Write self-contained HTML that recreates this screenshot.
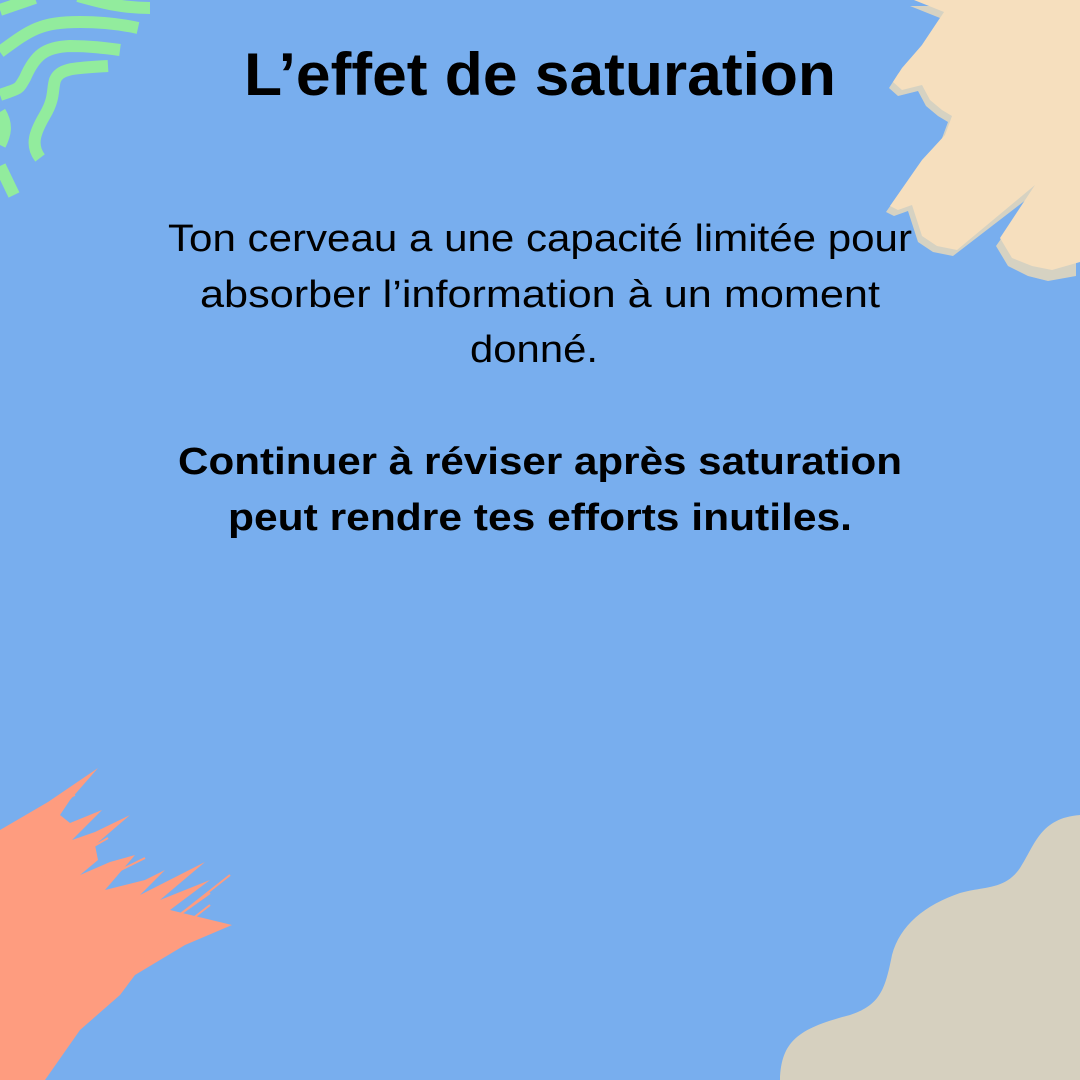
<!DOCTYPE html>
<html><head><meta charset="utf-8"><style>
html,body{margin:0;padding:0;width:1080px;height:1080px;overflow:hidden;background:#78aeee}
svg{display:block}
text{font-family:"Liberation Sans",sans-serif;fill:#000}
</style></head><body>
<svg width="1080" height="1080" viewBox="0 0 1080 1080" xmlns="http://www.w3.org/2000/svg">
<rect width="1080" height="1080" fill="#78aeee"/>
<g fill="none" stroke="#92ec9d" stroke-width="12" stroke-linecap="butt">
<path d="M0 10 L35 -2"/>
<path d="M78 -4 C100 2 120 8 150 8"/>
<path d="M0 52 C30 30 40 22 80 22 C100 22 120 24 138 28"/>
<path d="M0 95 C20 88 18 90 25 78 C35 55 45 47 70 46 C90 46 105 48 120 50"/>
<path d="M40 158 C30 145 35 132 45 115 C55 98 52 90 55 80 C60 68 75 68 108 66"/>
<path d="M0 112 C8 125 5 135 0 145"/>
<path d="M0 166 L14 195"/>
</g>
<polygon fill="#d6d2c2" transform="translate(-4,6)" points="914,0 944,12 922,45 902,68 893,82 902,90 922,85 930,100 942,110 952,116 945,135 922,160 890,206 898,210 912,205 922,236 937,246 957,250 1035,190 1000,240 1012,260 1032,270 1052,275 1080,270 1080,0"/>
<polygon fill="#f6dfbe" points="914,0 944,12 922,45 902,68 893,82 902,90 922,85 930,100 942,110 952,116 945,135 922,160 890,206 898,210 912,205 922,236 937,246 957,250 1035,185 1000,238 1012,258 1032,266 1052,270 1080,262 1080,0"/>
<polygon fill="#fe9c7f" points="0,830 48,802 98,768 70,800 60,815 70,823 102,810 72,840 95,832 130,815 95,845 98,860 80,875 110,862 135,855 105,890 145,880 165,870 140,895 205,862 160,900 210,880 170,910 232,925 185,945 135,975 120,995 80,1030 45,1080 0,1080"/>
<g stroke="#fe9c7f" stroke-width="2" fill="none">
<path d="M50 805 L75 795"/><path d="M35 880 L108 838"/><path d="M80 890 L145 858"/><path d="M38 1000 L140 915"/><path d="M135 950 L230 875"/><path d="M120 975 L210 905"/><path d="M165 925 L210 893"/>
</g>
<path fill="#d6d0bf" d="M780 1080 C781 1040 800 1028 850 1015 C880 1005 885 990 892 955 C900 925 925 905 960 893 C985 886 1005 890 1020 868 C1035 845 1040 818 1080 815 L1080 1080 Z"/>
<text x="540" y="95" text-anchor="middle" font-weight="bold" font-size="60" textLength="592" lengthAdjust="spacingAndGlyphs">L’effet de saturation</text>
<text x="540" y="251" text-anchor="middle" font-size="38" textLength="744" lengthAdjust="spacingAndGlyphs">Ton cerveau a une capacité limitée pour</text>
<text x="540" y="307" text-anchor="middle" font-size="38" textLength="680" lengthAdjust="spacingAndGlyphs">absorber l’information à un moment</text>
<text x="534" y="362" text-anchor="middle" font-size="38" textLength="128" lengthAdjust="spacingAndGlyphs">donné.</text>
<text x="540" y="474" text-anchor="middle" font-weight="bold" font-size="38" textLength="724" lengthAdjust="spacingAndGlyphs">Continuer à réviser après saturation</text>
<text x="540" y="530" text-anchor="middle" font-weight="bold" font-size="38" textLength="624" lengthAdjust="spacingAndGlyphs">peut rendre tes efforts inutiles.</text>
</svg>
</body></html>
